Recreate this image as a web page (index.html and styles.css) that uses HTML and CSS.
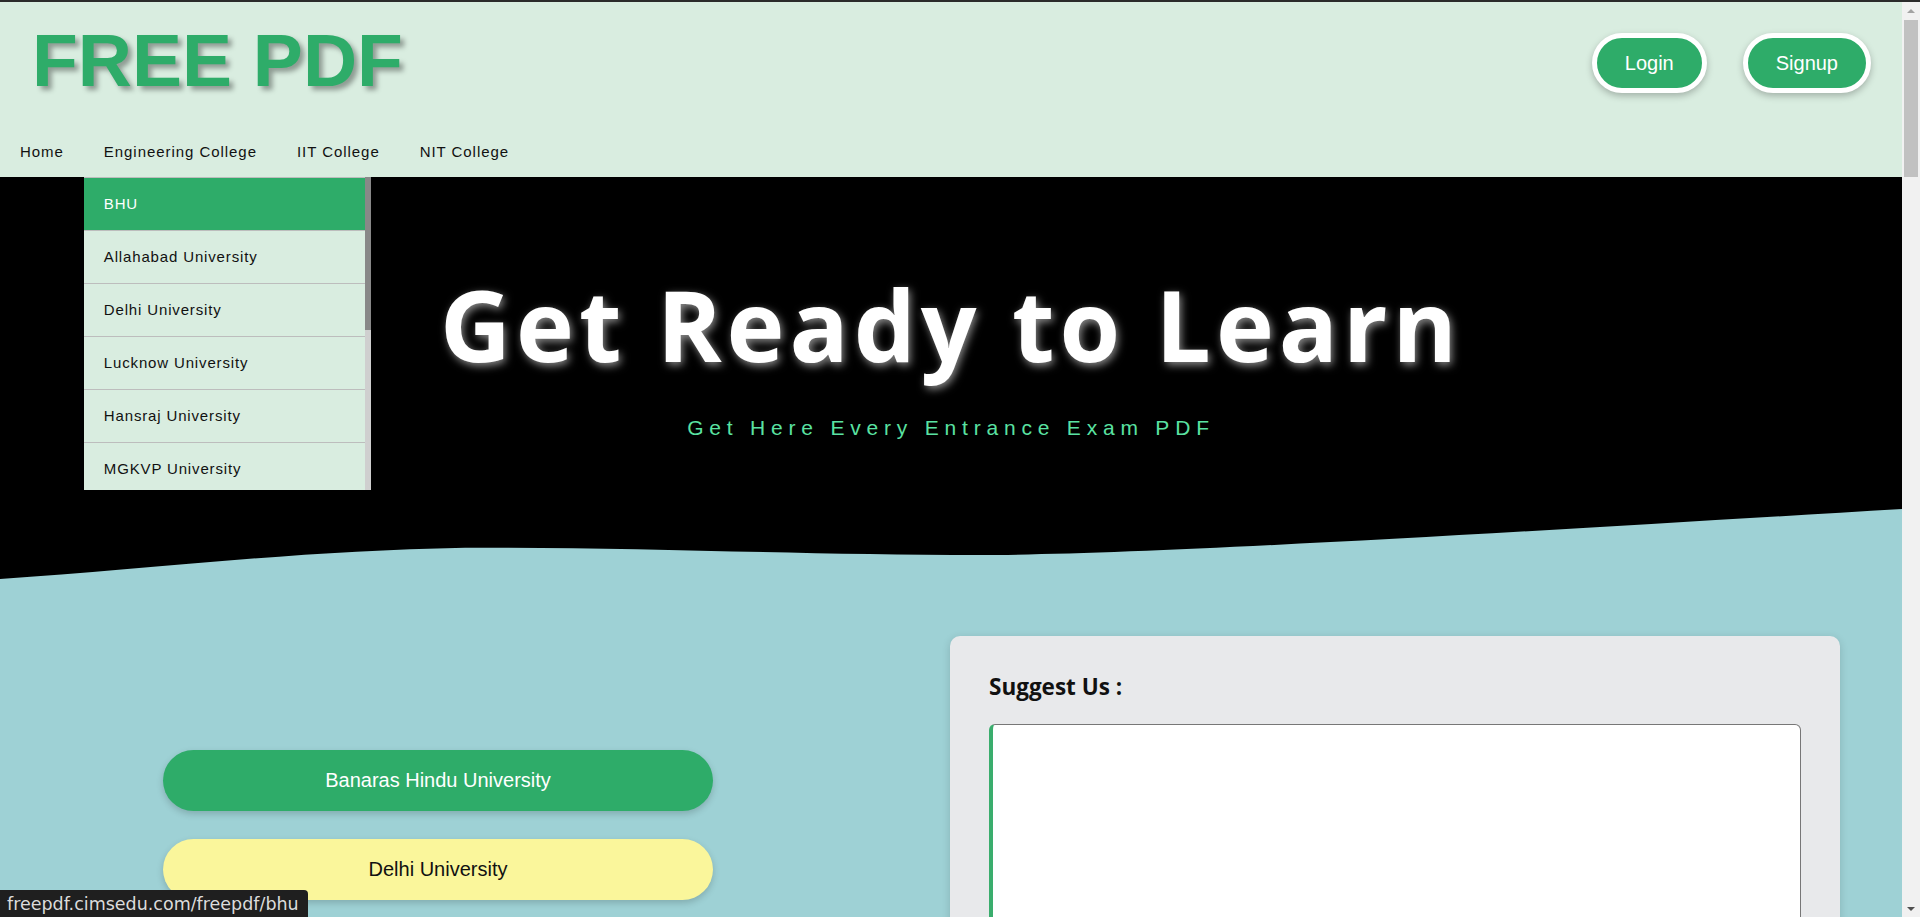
FILE: index.html
```html
<!DOCTYPE html>
<html lang="en">
<head>
<meta charset="utf-8">
<title>FREE PDF</title>
<link rel="stylesheet" href="styles.css">
</head>
<body>
<div class="page">
  <header class="site-header">
    <div class="top-row">
      <h1 class="logo">FREE PDF</h1>
      <div class="auth">
        <a class="pill-btn" href="#">Login</a>
        <a class="pill-btn" href="#">Signup</a>
      </div>
    </div>
    <nav class="main-nav">
      <ul class="nav-list">
        <li><a href="#">Home</a></li>
        <li class="has-drop"><a href="#">Engineering College</a>
          <div class="dropdown">
            <ul class="drop-list">
              <li><a class="active" href="#">BHU</a></li>
              <li><a href="#">Allahabad University</a></li>
              <li><a href="#">Delhi University</a></li>
              <li><a href="#">Lucknow University</a></li>
              <li><a href="#">Hansraj University</a></li>
              <li><a href="#">MGKVP University</a></li>
            </ul>
            <div class="drop-scroll"><div class="drop-thumb"></div></div>
          </div>
        </li>
        <li><a href="#">IIT College</a></li>
        <li><a href="#">NIT College</a></li>
      </ul>
    </nav>
  </header>

  <section class="hero">
    <h2 class="hero-title">Get Ready to Learn</h2>
    <p class="hero-sub">Get Here Every Entrance Exam PDF</p>
    <svg class="wave" viewBox="0 0 1902 80" preserveAspectRatio="none" aria-hidden="true">
      <path d="M0,79 C140,70 290,51 465,47.7 C640,47 800,55 980,55 C1150,55 1550,30 1902,9 L1902,80 L0,80 Z" fill="#9ed1d5"/>
    </svg>
  </section>

  <main class="content">
    <div class="uni-list">
      <a class="uni-btn uni-green" href="#">Banaras Hindu University</a>
      <a class="uni-btn uni-yellow" href="#">Delhi University</a>
    </div>
    <div class="suggest-card">
      <h3 class="suggest-title">Suggest Us :</h3>
      <textarea class="suggest-box"></textarea>
    </div>
  </main>
</div>

<div class="scrollbar" aria-hidden="true">
  <div class="sb-btn"><span class="arrow-up"></span></div>
  <div class="sb-track"><div class="sb-thumb"></div></div>
  <div class="sb-btn"><span class="arrow-down"></span></div>
</div>

<div class="status">freepdf.cimsedu.com/freepdf/bhu</div>
</body>
</html>
```

FILE: styles.css
```css
* { box-sizing: border-box; }

html, body { height: 100%; }

body {
  margin: 0;
  height: 917px;
  overflow: hidden;
  display: flex;
  border-top: 2px solid #2b2b2b;
  font-family: "Liberation Sans", Arial, sans-serif;
  background: #9ed1d5;
}

.page {
  flex: 1;
  min-width: 0;
  overflow: hidden;
  background: #9ed1d5;
}

/* ---------- header ---------- */
.site-header {
  background: #d9ede0;
  position: relative;
  z-index: 5;
}

.top-row {
  height: 127px;
  display: flex;
  justify-content: space-between;
  align-items: flex-start;
}

.logo {
  margin: 21px 0 0 32px;
  font-family: "Liberation Sans", Arial, sans-serif;
  font-size: 75px;
  line-height: 1;
  font-weight: 700;
  color: #2eac69;
  text-shadow: 4px 4px 5px rgba(0, 0, 0, 0.35);
}

.auth {
  display: flex;
  gap: 36px;
  margin: 31px 31px 0 0;
}

.pill-btn {
  display: block;
  padding: 13px 28px;
  line-height: 24px;
  font-size: 20px;
  color: #ffffff;
  background: #2eac69;
  border: 5px solid #ffffff;
  border-radius: 32px;
  text-decoration: none;
  box-shadow: 0 3px 7px rgba(0, 0, 0, 0.25);
}

.main-nav { height: 48px; }

.nav-list {
  list-style: none;
  margin: 0;
  padding: 0;
  display: flex;
}

.nav-list > li { position: relative; }

.nav-list > li > a {
  display: block;
  padding: 13px 20px 15px;
  line-height: 20px;
  font-size: 15px;
  letter-spacing: 0.95px;
  color: #111;
  text-decoration: none;
}

.dropdown {
  position: absolute;
  top: 100%;
  left: 0;
  width: 287px;
  height: 313px;
  overflow: hidden;
  display: flex;
  background: #d9ede0;
}

.drop-list {
  flex: 1;
  list-style: none;
  margin: 0;
  padding: 0;
}

.drop-list a {
  display: block;
  border-top: 1px solid #bdbdbd;
  padding: 17px 20px 18px;
  line-height: 17px;
  font-size: 15px;
  letter-spacing: 0.85px;
  color: #111;
  text-decoration: none;
  white-space: nowrap;
}

.drop-list a.active {
  background: #2eac69;
  color: #fff;
}

.drop-scroll {
  width: 6px;
  flex: none;
  background: #cfcfcf;
}

.drop-thumb {
  height: 153px;
  background: #888;
}

/* ---------- hero ---------- */
.hero {
  position: relative;
  height: 403px;
  background: #000;
  padding-top: 98px;
  text-align: center;
}

.hero-title {
  margin: 0;
  font-family: "Open Sans", "Noto Sans", sans-serif;
  font-size: 98px;
  line-height: 1;
  font-weight: 700;
  letter-spacing: 5px;
  color: #fff;
  text-shadow: 2px 3px 8px rgba(255, 255, 255, 0.55);
}

.hero-sub {
  margin: 44px 0 0;
  font-size: 21px;
  line-height: 1;
  letter-spacing: 5.8px;
  color: #5ae2a2;
}

.wave {
  position: absolute;
  left: 0;
  bottom: 0;
  width: 100%;
  height: 80px;
  display: block;
}

/* ---------- content ---------- */
.content {
  display: flex;
  align-items: flex-start;
  padding-left: 163px;
}

.uni-list {
  width: 550px;
  margin-top: 170px;
  display: flex;
  flex-direction: column;
  gap: 28px;
}

.uni-btn {
  display: block;
  padding: 19px 20px;
  line-height: 23px;
  font-size: 20px;
  text-align: center;
  border-radius: 31px;
  text-decoration: none;
  box-shadow: 0 3px 7px rgba(0, 0, 0, 0.18);
}

.uni-green { background: #2eac69; color: #fff; }
.uni-yellow { background: #faf69b; color: #111; }

.suggest-card {
  width: 890px;
  margin: 56px 62px 0 auto;
  padding: 38px 39px 40px;
  background: #e8e9eb;
  border-radius: 10px;
  box-shadow: 0 2px 8px rgba(0, 0, 0, 0.15);
}

.suggest-title {
  margin: 0 0 24px;
  font-family: "Open Sans", "Noto Sans", sans-serif;
  font-size: 22.5px;
  line-height: 26px;
  font-weight: 700;
  color: #111;
}

.suggest-box {
  display: block;
  width: 100%;
  height: 300px;
  resize: none;
  background: #fff;
  border: 1px solid #777;
  border-left: 4px solid #3aad6d;
  border-radius: 6px;
}

/* ---------- fake window scrollbar ---------- */
.scrollbar {
  width: 18px;
  flex: none;
  display: flex;
  flex-direction: column;
  background: #f1f1f1;
}

.sb-btn {
  height: 17px;
  display: flex;
  align-items: center;
  justify-content: center;
}

.arrow-up, .arrow-down {
  width: 0;
  height: 0;
  border-left: 4px solid transparent;
  border-right: 4px solid transparent;
}
.arrow-up { border-bottom: 4px solid #a3a3a3; }
.arrow-down { border-top: 4px solid #505050; }

.sb-track { flex: 1; padding: 1px 2px 0; }

.sb-thumb {
  height: 157px;
  background: #c1c1c1;
}

/* ---------- status tooltip ---------- */
.status {
  position: fixed;
  left: 0;
  bottom: 0;
  height: 27px;
  padding: 0 9px 0 7px;
  display: flex;
  align-items: center;
  background: #1f1f1f;
  color: #dcdcdc;
  font-family: "DejaVu Sans", sans-serif;
  font-size: 17.5px;
  border-top-right-radius: 4px;
}
```
